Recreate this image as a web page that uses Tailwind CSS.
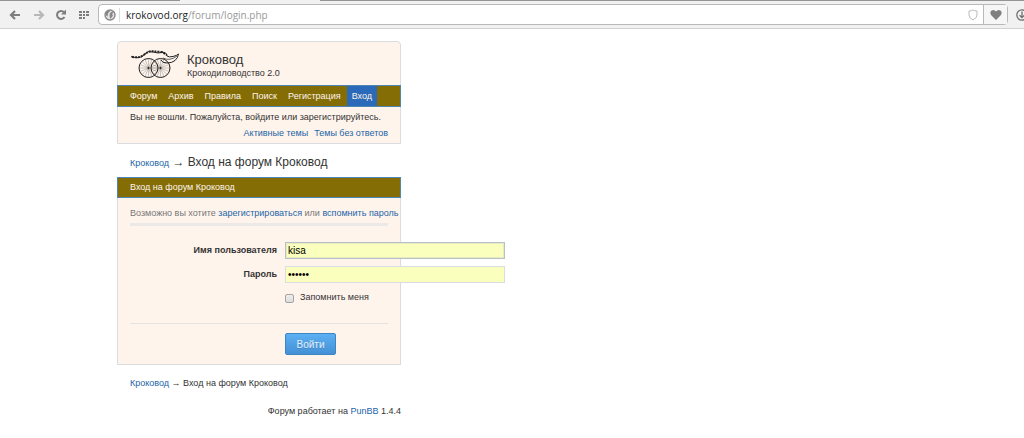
<!DOCTYPE html>
<html lang="ru">
<head>
    <meta charset="UTF-8">
    <meta name="viewport" content="width=device-width, initial-scale=1.0">
    <title>Вход на форум Кроковод</title>
    <script src="https://cdn.jsdelivr.net/npm/@tailwindcss/browser@4"></script>
</head>
<body class="bg-white font-['Liberation_Sans',Arial,sans-serif] text-[9px] text-[#333] overflow-x-hidden">

    <!-- Browser toolbar -->
    <div class="flex h-px bg-[#949494]">
        <div class="w-[180px]"></div>
        <div class="w-[140px] bg-[#f1f1f1]"></div>
    </div>
    <div class="flex h-7 items-center overflow-hidden border-b border-[#d2d2d2] bg-[#f1f1f1] pl-[7px]">
        <div class="flex shrink-0 items-center gap-[7px] pr-1.5 text-[#7d7d7d]">
            <button class="block" aria-label="Назад">
                <svg class="h-4 w-4" viewBox="0 0 16 16" fill="none" stroke="currentColor" stroke-width="2.200"><path d="M13 8H4.500M8 4L4 8l4 4"/></svg>
            </button>
            <button class="block text-[#b8b8b8]" aria-label="Вперёд">
                <svg class="h-4 w-4" viewBox="0 0 16 16" fill="none" stroke="currentColor" stroke-width="2.200"><path d="M4 8h8.500M9 4l4 4-4 4"/></svg>
            </button>
            <button class="block" aria-label="Обновить">
                <svg class="h-4 w-4" viewBox="0 0 16 16"><path d="M11.500 10A4 4 0 1 1 11 5.200" fill="none" stroke="currentColor" stroke-width="2"/><path d="M13 2.500v5H8z" fill="currentColor"/></svg>
            </button>
            <button class="block" aria-label="Экспресс-панель">
                <svg class="h-4 w-4" viewBox="0 0 16 16" fill="currentColor"><path d="M3 4h3v2H3zM7 4h2v2H7zM10 4h3v2h-3zM3 7h3v2H3zM7 7h2v2H7zM10 7h3v2h-3zM3 10h3v2H3zM7 10h2v2H7z"/></svg>
            </button>
        </div>
        <div class="flex h-[21px] grow items-center rounded-sm border border-[#b9b9b9] bg-white pl-[5px]">
            <svg class="mr-[3px] h-3 w-3 shrink-0" viewBox="0 0 12 12"><circle cx="6" cy="6" r="5" fill="#e4e4e4" stroke="#888" stroke-width="1.400"/><path d="M1.500 3l3-2 1.500 1-2 2.500-.5 3L2 6.500zM6 4l2-1.500 1.500 1L8 5l1 1.500L6.500 10 5.500 7z" fill="#888"/></svg>
            <div role="textbox" aria-label="Адрес" class="grow border-l border-[#ddd] pl-1.5 font-['Open_Sans',sans-serif] text-[10px] leading-3.5 text-[#999]"><span class="text-[#222]">krokovod.org</span>/forum/login.php</div>
            <svg class="mr-1 h-3 w-3 shrink-0" viewBox="0 0 12 12" fill="none" stroke="#bbb"><path d="M2 2q2.500 0 4-1 1.500 1 4 1v4q0 3-4 5-4-2-4-5z"/></svg>
            <button class="flex h-full w-6 items-center justify-center border-l border-[#b9b9b9] bg-[#f6f6f6]" aria-label="Закладки">
                <svg class="h-3 w-3" viewBox="0 0 12 12" fill="#808080"><path d="M6 11L1 6Q-.5 3 1.500 1.500 4 0 6 2.500 8 0 10.500 1.500 12.500 3 11 6z"/></svg>
            </button>
        </div>
        <button class="-mr-1 ml-2 shrink-0" aria-label="Загрузки">
            <svg class="h-3 w-3" viewBox="0 0 12 12" fill="none" stroke="#6f6f6f" stroke-width="1.300"><circle cx="6" cy="6" r="5.200"/><path d="M6 2.500v6M3.500 6.200L6 8.700l2.500-2.500"/></svg>
        </button>
    </div>

    <div class="mr-4 ml-[117px] max-w-[284px] pt-3">
        <!-- Header -->
        <header class="rounded-t border border-[#d9dde2] bg-[#fff4ec]">
            <div class="flex h-[43px] items-center gap-2 px-3">
                <svg class="h-7 w-[49px] shrink-0" viewBox="0 0 49 28" fill="none" stroke="#222">
                    <!-- spokes -->
                    <g stroke="#666" stroke-width=".35">
                        <path d="M18.500 8.500v19M9 18h19M11.800 11.300l13.400 13.400M25.200 11.300L11.800 24.700M14.900 9.200l7.200 17.600M22.100 9.200l-7.200 17.600M9.700 14.400l17.600 7.200M27.300 14.400L9.700 21.600"/>
                        <path d="M30.500 8.500v19M21 18h19M23.800 11.300l13.400 13.400M37.200 11.300L23.800 24.700M26.900 9.200l7.200 17.600M34.100 9.200l-7.200 17.600M21.700 14.400l17.600 7.200M39.300 14.400l-17.600 7.200"/>
                    </g>
                    <!-- wheels -->
                    <circle cx="18.500" cy="18" r="9.500"/>
                    <circle cx="30.500" cy="18" r="9.500"/>
                    <circle cx="18.500" cy="18" r=".6" fill="#222"/>
                    <circle cx="30.500" cy="18" r=".6" fill="#222"/>
                    <!-- crocodile -->
                    <path d="M1 6.700q3 1 7 1T15 4t8-2 9 .5 5 3.500q2 1.500 6 .5t5.500-2.500q-.5 4-3.500 6.500T37 13t-6-3"/>
                    <path d="M2 6.700q7 2 12-2T23 1.200t9 .8l5 3" stroke-width="2" stroke-dasharray="2 1"/>
                    <path d="M33 8q7 3.500 14-2" stroke-width=".7"/>
                </svg>
                <div class="pt-1">
                    <p class="text-[13px] leading-3.5">Кроковод</p>
                    <p class="leading-3">Крокодиловодство 2.0</p>
                </div>
            </div>
            <nav class="-mx-px flex h-[22px] gap-px border border-[#4f86b8] bg-[#846d05] pl-[7px] leading-5 text-[#fff4ec]">
                <a href="#" class="px-[5px]">Форум</a>
                <a href="#" class="px-[5px]">Архив</a>
                <a href="#" class="px-[5px]">Правила</a>
                <a href="#" class="px-[5px]">Поиск</a>
                <a href="#" class="px-[5px]">Регистрация</a>
                <a href="#" class="bg-[#2a6ab8] px-[5px]">Вход</a>
            </nav>
            <div class="px-3 pt-0.5 pb-0.5 leading-4">
                <p>Вы не вошли. Пожалуйста, войдите или зарегистрируйтесь.</p>
                <p class="flex justify-end gap-1.5 text-[#1c65a8]"><a href="#">Активные темы</a><a href="#">Темы без ответов</a></p>
            </div>
        </header>

        <p class="px-[13px] pt-1 text-xs leading-7"><a href="#" class="text-[9px] text-[#1c65a8]">Кроковод</a> → Вход на форум Кроковод</p>

        <main>
            <h1 class="h-[21px] border border-[#4f86b8] bg-[#846d05] px-3 leading-[19px] text-[#fff4ec]">Вход на форум Кроковод</h1>
            <form class="border border-t-0 border-[#d9dde2] bg-[#fff4ec] px-3 pt-[7px] pb-[9px]">
                <p class="border-b-3 border-[#ebe9e8] pb-0.5 leading-4 whitespace-nowrap text-[#777]">Возможно вы хотите <a href="#" class="text-[#1c65a8]">зарегистрироваться</a> или <a href="#" class="text-[#1c65a8]">вспомнить пароль</a></p>
                <div class="mt-4 grid grid-cols-[147px_220px] gap-x-2 gap-y-[7px]">
                    <label for="user" class="text-right leading-4 font-bold">Имя пользователя</label>
                    <input id="user" type="text" value="kisa" class="h-[17px] border border-[#b9bfc6] bg-[#faffbd] px-0.5 text-[10px] text-black ring-1 ring-[#b9bfc6]/30 ring-inset outline-none">
                    <label for="pass" class="text-right leading-4 font-bold">Пароль</label>
                    <input id="pass" type="password" value="secret" class="h-[17px] border border-[#d9dde2] bg-[#faffbd] px-0.5 text-[10px] text-black outline-none">
                    <div class="col-start-2 flex h-4 items-center gap-1.5">
                        <input id="remember" type="checkbox" class="h-[9px] w-[9px] appearance-none rounded-xs border border-[#a5a5a5] bg-linear-to-b from-[#eee] to-[#ddd]">
                        <label for="remember">Запомнить меня</label>
                    </div>
                </div>
                <div class="mt-[17px] border-t border-[#e2e2e4] pt-[9px] pl-[155px]">
                    <button type="button" class="block h-[22px] w-[51px] rounded-xs border border-[#3c86c4] bg-linear-to-b from-[#5cb0f2] to-[#4490d6] text-[10px] text-[#e4f0fa] text-shadow-2xs">Войти</button>
                </div>
            </form>
        </main>

        <p class="px-[13px] leading-9"><a href="#" class="text-[#1c65a8]">Кроковод</a> → Вход на форум Кроковод</p>
        <footer class="text-right leading-5">Форум работает на <a href="#" class="text-[#1c65a8]">PunBB</a> 1.4.4</footer>
    </div>
</body>
</html>
